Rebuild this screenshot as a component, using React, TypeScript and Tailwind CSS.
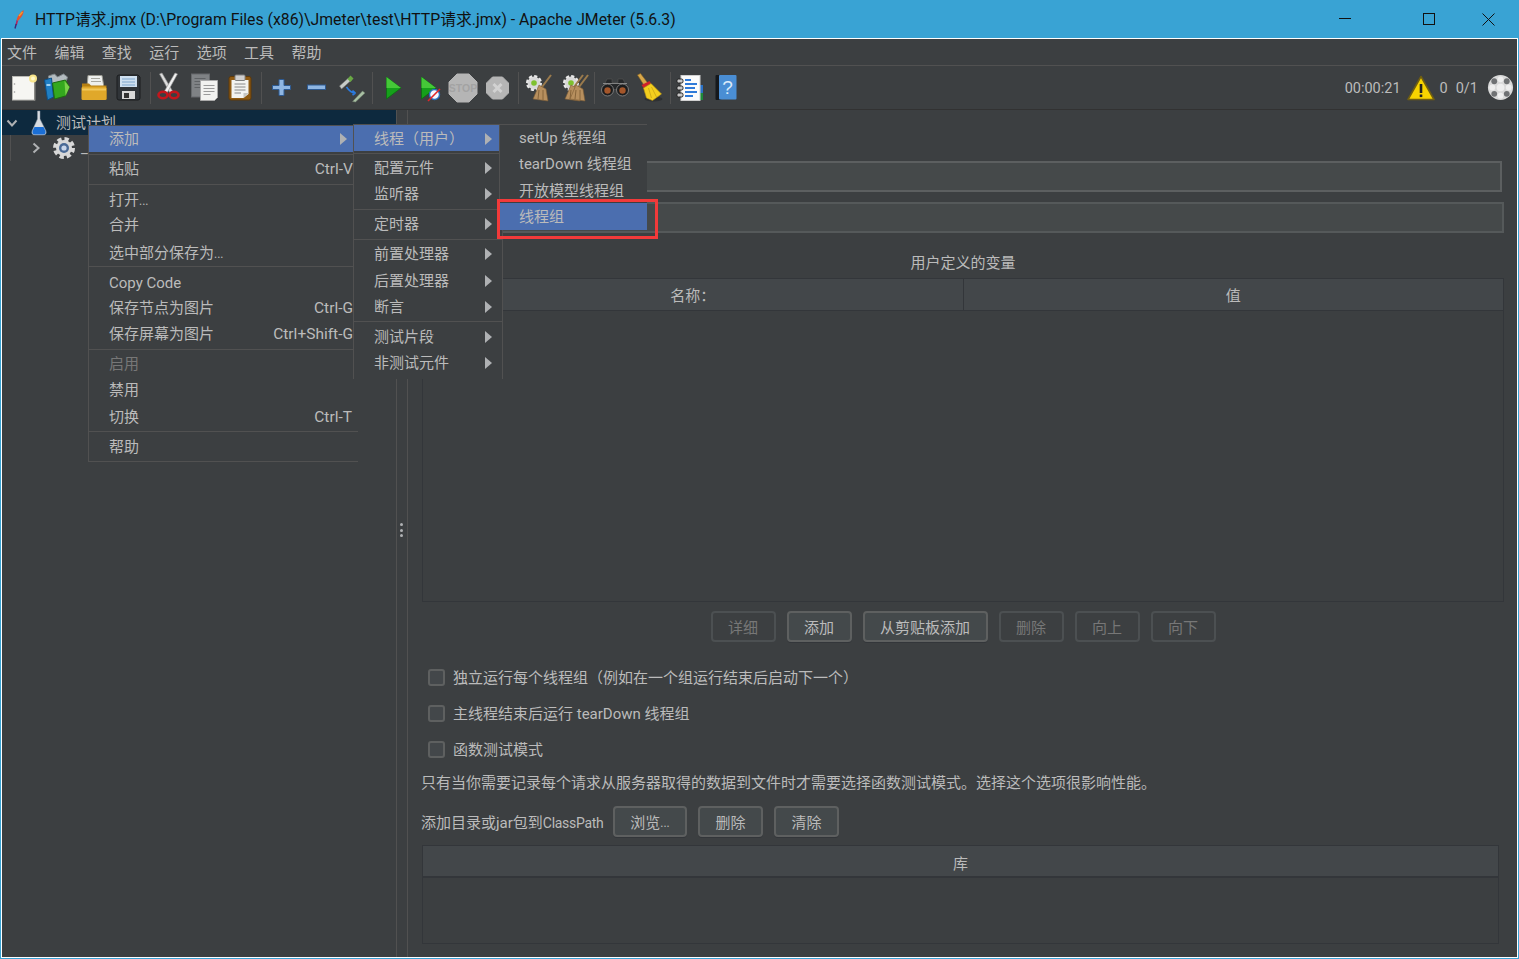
import React from "react";

const FONT = "font-['Roboto','Noto_Sans_CJK_SC',sans-serif]";

const Svg = ({ children, t }: { children: React.ReactNode; t?: string }) => (
  <svg viewBox="0 0 32 32" className="w-8 h-8 block" fill="none"><g transform={t}>{children}</g></svg>
);

const NewIcon = () => (
  <Svg>
    <rect x="3.5" y="4.5" width="22" height="23.5" fill="#f6f6f2" stroke="#b9b9b4" />
    <rect x="25" y="6" width="1.5" height="22.5" fill="#8a8a86" />
    <circle cx="5.5" cy="12" r="0.8" fill="#999" />
    <circle cx="5.5" cy="20" r="0.8" fill="#999" />
    <circle cx="24" cy="6.5" r="4" fill="#f7e48a" />
    <circle cx="24" cy="6.5" r="2" fill="#fff8c8" />
  </Svg>
);
const TemplatesIcon = () => (
  <Svg t="translate(-2.5 -1)">
    <path d="M7 5 L13 3 L16 6 L22 3 L26 6 L24 13 L8 13 Z" fill="#b4bcc0" stroke="#7d8589" />
    <path d="M3 9 L10 7 L12 26 L6 29 Z" fill="#1f7fc4" stroke="#0e4f85" />
    <path d="M11 12 L24 9 L28 16 L24 25 L13 28 Z" fill="#34a81e" stroke="#1d6a10" />
    <path d="M23 10 L28 16 L24 25 Z" fill="#7ad04a" />
    <rect x="5" y="13" width="4" height="2" fill="#9cd1f2" />
  </Svg>
);
const OpenIcon = () => (
  <Svg t="translate(0 -1.5)">
    <path d="M9 5 L23 5 L25 17 L8 17 Z" fill="#eef0ee" stroke="#9a9a92" />
    <path d="M12 8 H21 M12 11 H22" stroke="#a8a8a0" />
    <path d="M3 13 H10 L12 15 H27.5 V29 H3 Z" fill="#b57f13" />
    <path d="M2.5 18 Q2.5 16 4 16 H26.5 L27.5 18 V28 Q27.5 29.5 26 29.5 H4 Q2.5 29.5 2.5 28 Z" fill="#e0a82a" />
    <path d="M3 18 H27 V20 H3 Z" fill="#f2c85a" />
  </Svg>
);
const SaveIcon = () => (
  <Svg>
    <path d="M3 5 Q3 3 5 3 H24 L26 5 V26 Q26 28 24 28 H5 Q3 28 3 26 Z" fill="#303438" stroke="#1a1c1e" />
    <rect x="6" y="4" width="17" height="11" fill="#cfe0f0" />
    <path d="M8 7 H21 M8 10 H21 M8 13 H21" stroke="#7ea6cc" />
    <rect x="8" y="19" width="13" height="8" fill="#d8d8d8" />
    <rect x="10" y="21" width="5" height="5" fill="#333" />
  </Svg>
);
const CutIcon = () => (
  <Svg t="translate(-1.5 -2)">
    <path d="M6 4 L8.5 3 L19 21 L16.5 23 Z" fill="#dcdcdc" stroke="#8f8f8f" strokeWidth="0.6" />
    <path d="M24 4 L21.5 3 L11 21 L13.5 23 Z" fill="#f0f0f0" stroke="#8f8f8f" strokeWidth="0.6" />
    <ellipse cx="9.5" cy="25" rx="4.5" ry="3.2" stroke="#c4161c" strokeWidth="2.6" />
    <ellipse cx="20.5" cy="25" rx="4.5" ry="3.2" stroke="#c4161c" strokeWidth="2.6" />
  </Svg>
);
const CopyIcon = () => (
  <Svg t="translate(-1.5 -1.5)">
    <rect x="3" y="3.5" width="18" height="23" fill="#7f8285" stroke="#66696c" />
    <path d="M6 8 H17 M6 11 H17 M6 14 H17 M6 17 H12" stroke="#5f6265" />
    <path d="M12 10 H29 V27 L26 30 H12 Z" fill="#f2f2f0" stroke="#aaa" />
    <path d="M15 15 H26 M15 18 H26 M15 21 H26 M15 24 H22" stroke="#9a9a9a" />
  </Svg>
);
const PasteIcon = () => (
  <Svg>
    <rect x="4" y="4.5" width="22" height="23.5" rx="2" fill="#8f5a12" stroke="#5e3a0a" />
    <path d="M6.5 8 H23.5 V22 L18.5 26 H6.5 Z" fill="#f3f3f1" />
    <path d="M18.5 26 V21 H23.5 Z" fill="#c5c5c2" />
    <rect x="10" y="3" width="10" height="5.5" rx="1" fill="#cfcfcf" stroke="#808080" />
    <path d="M9.5 12 H20.5 M9.5 15 H20.5 M9.5 18 H20.5 M9.5 21 H16" stroke="#888" />
  </Svg>
);
const PlusIcon = () => (
  <Svg t="translate(-0.5 -0.5)">
    <path d="M13.5 8 H18.5 V14 H25 V18 H18.5 V24 H13.5 V18 H7 V14 H13.5 Z" fill="#8fb6e2" stroke="#2d5a92" />
  </Svg>
);
const MinusIcon = () => (
  <Svg t="translate(-0.5 -0.5)">
    <rect x="7" y="13.5" width="18" height="4.5" fill="#8fb6e2" stroke="#2d5a92" />
  </Svg>
);
const ToggleIcon = () => (
  <Svg t="translate(-0.5 -1)">
    <path d="M4 15 L13 7 L15.5 9.5 L6 18 Z" fill="#c8ccc8" stroke="#777" strokeWidth="0.6" />
    <path d="M12 8 L15 4.5 L18 7.5 L15 11 Z" fill="#69a844" />
    <path d="M11 16 Q15 22 20 22 M20 22 L17 19.5 M20 22 L17 24" stroke="#2a7ae0" strokeWidth="1.6" />
    <path d="M17 30.5 L27 20 L29.5 22 L20 31 Z" fill="#a9c0a4" stroke="#6b7a68" strokeWidth="0.5" />
  </Svg>
);
const PlayIcon = ({ badge }: { badge?: boolean }) => (
  <Svg>
    <path d="M9.5 5 L24 16 L9.5 27 Z" fill="#15a01a" stroke="#0d6b12" strokeWidth="0.8" />
    <path d="M9.5 5 L24 16 L9.5 16 Z" fill="#45c838" />
    {badge && (
      <>
        <circle cx="22.5" cy="22.5" r="5" fill="#f4f8ff" stroke="#2a6fc0" strokeWidth="1.4" />
        <path d="M16 29 L28 17" stroke="#e0262a" strokeWidth="1.6" />
      </>
    )}
  </Svg>
);
const StopIcon = () => (
  <svg viewBox="0 0 32 32" className="w-8 h-8 block">
    <path d="M10 2 H22 L30 10 V22 L22 30 H10 L2 22 V10 Z" fill="#b5b5b5" stroke="#b5b5b5" strokeWidth="1" strokeLinejoin="round" />
    <text x="16" y="20" textAnchor="middle" fontSize="10.5" fontWeight="700" fill="#a3a3a3" fontFamily="Liberation Sans, sans-serif">STOP</text>
  </svg>
);
const ShutdownIcon = () => (
  <Svg t="translate(-0.5 0)">
    <path d="M11 5 H21 L27 11 V21 L21 27 H11 L5 21 V11 Z" fill="#b5b5b5" stroke="#b5b5b5" strokeLinejoin="round" />
    <path d="M12 12 L20 20 M20 12 L12 20" stroke="#d2d2d2" strokeWidth="3" />
  </Svg>
);
const Broom = ({ x = 0 }: { x?: number }) => (
  <g transform={`translate(${x} 0)`}>
    <path d="M28 3 L19 15" stroke="#9a7a4c" strokeWidth="2" />
    <path d="M16 13 L23 17 L25 29 L10 27 Z" fill="#b78f5e" stroke="#7a5a34" strokeWidth="0.6" />
    <path d="M16 18 L15 27 M20 18 L20 28" stroke="#86643a" />
  </g>
);
const ClearIcon = ({ all }: { all?: boolean }) => (
  <Svg>
    <g transform={all ? "translate(2 0)" : undefined}>
      <circle cx="11" cy="11" r="6.5" fill="#d9d9d9" stroke="#e8e8e8" strokeWidth="3" strokeDasharray="3 2" />
      <circle cx="11" cy="11" r="6" fill="#d8d8d8" />
      <circle cx="11" cy="11" r="2.8" fill="#7fc12f" />
    </g>
    {all && <Broom x={-3} />}
    <Broom x={all ? 2 : 0} />
  </Svg>
);
const BinocularsIcon = () => (
  <Svg t="translate(0 -1.5)">
    <path d="M8 8.5 H13 V12 H19 V8.5 H24 L29 19 H3 Z" fill="#26282a" stroke="#555" strokeWidth="0.6" />
    <circle cx="8.5" cy="19.5" r="6" fill="#1c1d1e" stroke="#8d8d8d" strokeWidth="0.8" />
    <circle cx="23.5" cy="19.5" r="6" fill="#1c1d1e" stroke="#8d8d8d" strokeWidth="0.8" />
    <circle cx="8.5" cy="20" r="3.2" fill="#a4562a" />
    <circle cx="23.5" cy="20" r="3.2" fill="#a4562a" />
    <path d="M4 13 H28" stroke="#9a9a9a" strokeWidth="0.8" />
  </Svg>
);
const YellowBroomIcon = () => (
  <Svg t="translate(-0.5 0)">
    <ellipse cx="20" cy="27" rx="9" ry="2.5" fill="#2f3133" />
    <path d="M4 3 L7 1.5 L15 12 L11 14 Z" fill="#d8a84a" stroke="#8c6420" strokeWidth="0.6" />
    <path d="M8 13 L16 9 L17.5 11.5 L10 16 Z" fill="#d0202a" />
    <path d="M10 16 L17.5 11.5 L28 22 L19 28.5 L13 26 Z" fill="#f4cf1e" stroke="#bb9410" strokeWidth="0.6" />
    <path d="M15 16 L18 26 M18 15 L23 25" stroke="#c9a314" strokeWidth="0.8" />
  </Svg>
);
const ListIcon = () => (
  <Svg>
    <rect x="23" y="13" width="5" height="8" fill="#2a72c8" />
    <rect x="23" y="21" width="5" height="7" fill="#1d8a3a" />
    <rect x="6" y="3.5" width="19" height="25" fill="#fbfbfb" stroke="#d0d0d0" />
    <rect x="2" y="7" width="6" height="4" rx="1.5" fill="#c8c8c8" stroke="#222" />
    <rect x="2" y="14" width="6" height="4" rx="1.5" fill="#c8c8c8" stroke="#222" />
    <rect x="2" y="21" width="6" height="4" rx="1.5" fill="#c8c8c8" stroke="#222" />
    <path d="M10 8 H16 M10 12 H22 M10 16 H20 M10 20 H22 M10 24 H18" stroke="#2f7ad8" strokeWidth="1.8" />
  </Svg>
);
const HelpIcon = () => (
  <svg viewBox="0 0 32 32" className="w-8 h-8 block">
    <rect x="5.5" y="3" width="6" height="25" rx="1" fill="#15181c" />
    <rect x="9" y="3" width="17.5" height="24.5" rx="1" fill="#4a8ed4" />
    <text x="17.5" y="22" textAnchor="middle" fontSize="19" fill="#dcebfa" fontFamily="Liberation Sans, sans-serif">?</text>
  </svg>
);
const WarningIcon = () => (
  <svg viewBox="0 0 28 26" className="w-7 h-[26px] block">
    <path d="M14 1.5 L27 24.5 H1 Z" fill="#f7d300" stroke="#6f5e12" strokeWidth="1.6" strokeLinejoin="round" />
    <rect x="12.7" y="9" width="2.6" height="9" fill="#222" />
    <rect x="12.7" y="19.5" width="2.6" height="2.6" fill="#222" />
  </svg>
);
const BallIcon = () => (
  <svg viewBox="0 0 28 28" className="w-[27px] h-[27px] block">
    <circle cx="14" cy="14" r="13" fill="#d9d9d9" />
    <circle cx="14" cy="14" r="4" fill="#eeeeee" />
    <circle cx="14" cy="5.5" r="3" fill="#eeeeee" />
    <circle cx="14" cy="22.5" r="3" fill="#eeeeee" />
    <circle cx="5.5" cy="14" r="3" fill="#eeeeee" />
    <circle cx="22.5" cy="14" r="3" fill="#eeeeee" />
    <circle cx="7.5" cy="7.5" r="3" fill="#6f7173" />
    <circle cx="20.5" cy="7.5" r="3" fill="#6f7173" />
    <circle cx="7.5" cy="20.5" r="3" fill="#6f7173" />
    <circle cx="20.5" cy="20.5" r="3" fill="#6f7173" />
  </svg>
);
const FeatherIcon = () => (
  <svg viewBox="0 0 16 24" className="w-4 h-6 block">
    <path d="M13.5 3 Q14 7 10.5 11 L8 14 L6.5 13 Q8 7 13.5 3 Z" fill="#e8512c" />
    <path d="M9 9 L12.5 5" stroke="#f2a02f" strokeWidth="1.4" />
    <path d="M8 14 L6.5 13 L5.5 18 L7 18 Z" fill="#b8205a" />
    <path d="M6.2 17 L5 21.5" stroke="#3a2a78" strokeWidth="1.4" />
  </svg>
);
const FlaskIcon = () => (
  <svg viewBox="0 0 20 26" className="w-5 h-[26px] block">
    <path d="M8.5 1 H11 V9 L17 21 Q18 25 14 25 H6 Q2 25 3 21 L8.5 9 Z" fill="#d7dce2" stroke="#8a96a4" strokeWidth="0.5" />
    <path d="M5.5 17 H14.5 L16.5 21 Q17 24.5 14 24.5 H6 Q3 24.5 3.5 21 Z" fill="#1b6fd6" />
  </svg>
);
const GearIcon = () => (
  <svg viewBox="0 0 24 24" className="w-6 h-6 block">
    <circle cx="12" cy="12" r="9" fill="none" stroke="#d8d8d8" strokeWidth="4" strokeDasharray="4.2 2.9" />
    <circle cx="12" cy="12" r="8" fill="#d8d8d8" />
    <circle cx="12" cy="12" r="5" fill="#4a6a96" />
    <circle cx="12" cy="12" r="2.6" fill="#c9d6ea" />
  </svg>
);
const Chevron = ({ down }: { down?: boolean }) => (
  <svg viewBox="0 0 12 12" className="w-3 h-3 block">
    <path d={down ? "M1.5 3.5 L6 8.5 L10.5 3.5" : "M3.5 1.5 L8.5 6 L3.5 10.5"} fill="none" stroke="#afb1b3" strokeWidth="2" />
  </svg>
);
const Arrow = () => (
  <svg viewBox="0 0 7 12" className="w-[7px] h-3 block">
    <path d="M0 0 L7 6 L0 12 Z" fill="#afb1b3" />
  </svg>
);

const Dots = () => <span className="text-[12px]">...</span>;

const Sep = () => (
  <div className="w-[6px] h-[32px] flex justify-center shrink-0">
    <div className="w-px h-full bg-[#515151]" />
  </div>
);
const Tool = ({ children }: { children: React.ReactNode }) => (
  <div className="w-[35px] h-[32px] flex items-center justify-center shrink-0">{children}</div>
);

const Line = ({ className }: { className: string }) => (
  <div className={className}>
    <div className="h-px w-full bg-[#515151]" />
  </div>
);

const Item = ({ label, hot, kbd, disabled, arrow, className = "" }: { label: React.ReactNode; hot?: boolean; kbd?: string; disabled?: boolean; arrow?: boolean; className?: string }) => (
  <div className={`h-[26px] flex items-center justify-between ${hot ? "bg-[#4b6eaf]" : ""} ${disabled ? "text-[#777777]" : "text-[#bbbbbb]"} ${className}`}>
    <span className="whitespace-pre">{label}</span>
    {kbd && <span className="text-[15.5px]">{kbd}</span>}
    {arrow && <span className="mr-[7px]"><Arrow /></span>}
  </div>
);

const Btn = ({ label, w, off }: { label: React.ReactNode; w: string; off?: boolean }) => (
  <div className={`${w} h-[31px] pt-[2px] flex items-center justify-center rounded-[4px] border-2 ${off ? "border-[#4c5052] text-[#777777]" : "border-[#5e6060] bg-[#44494b] text-[#bbbbbb] shadow-[0_1px_0_#33363a]"}`}>{label}</div>
);

const Check = ({ label }: { label: string }) => (
  <div className="h-[36px] flex items-center pl-[7px]">
    <div className="w-[17px] h-[17px] rounded-[3px] border-2 border-[#5e6060] bg-[#43474a] mr-[8px]" />
    <span className="pt-[2px]">{label}</span>
  </div>
);

export default function App() {
  return (
    <div className={`relative w-[1519px] h-[959px] overflow-hidden bg-[#39a3d4] flex flex-col text-[15px] leading-[20px] text-[#bbbbbb] ${FONT}`}>
      <header className="h-[38px] shrink-0 flex items-center text-[#111111] pl-[10px]">
        <FeatherIcon />
        <span className="ml-[9px] pt-[2px] text-[15.8px] whitespace-pre">HTTP请求.jmx (D:\Program Files (x86)\Jmeter\test\HTTP请求.jmx) - Apache JMeter (5.6.3)</span>
        <div className="ml-auto flex items-center text-black">
          <svg viewBox="0 0 60 30" className="w-[60px] h-[30px]"><path d="M0 14.5 H12" stroke="#111" strokeWidth="1" /></svg>
          <svg viewBox="0 0 60 30" className="w-[60px] h-[30px]"><rect x="24.5" y="9.5" width="11" height="11" fill="none" stroke="#111" strokeWidth="1" /></svg>
          <svg viewBox="0 0 60 30" className="w-[60px] h-[30px]"><path d="M23.5 9.5 L35.5 21.5 M35.5 9.5 L23.5 21.5" stroke="#111" strokeWidth="1" /></svg>
        </div>
      </header>

      <div className="flex-1 min-h-0 mx-px mb-px border border-white bg-[#3c3f41] flex flex-col">
        <nav className="h-[26px] shrink-0 flex items-center gap-[17.4px] pl-[5px] border-b border-[#515151] box-content">
          {["文件", "编辑", "查找", "运行", "选项", "工具", "帮助"].map((m) => (
            <span key={m} className="pt-[2px]">{m}</span>
          ))}
        </nav>

        <div className="h-[43px] shrink-0 flex items-center pl-[5px] pr-[3px] border-b border-[#323232] box-content">
          <Tool><NewIcon /></Tool>
          <Tool><TemplatesIcon /></Tool>
          <Tool><OpenIcon /></Tool>
          <Tool><SaveIcon /></Tool>
          <Sep />
          <Tool><CutIcon /></Tool>
          <Tool><CopyIcon /></Tool>
          <Tool><PasteIcon /></Tool>
          <Sep />
          <Tool><PlusIcon /></Tool>
          <Tool><MinusIcon /></Tool>
          <Tool><ToggleIcon /></Tool>
          <Sep />
          <Tool><PlayIcon /></Tool>
          <Tool><PlayIcon badge /></Tool>
          <Tool><StopIcon /></Tool>
          <Tool><ShutdownIcon /></Tool>
          <Sep />
          <Tool><ClearIcon /></Tool>
          <Tool><ClearIcon all /></Tool>
          <Sep />
          <Tool><BinocularsIcon /></Tool>
          <Tool><YellowBroomIcon /></Tool>
          <Sep />
          <Tool><ListIcon /></Tool>
          <Tool><HelpIcon /></Tool>
          <div className="ml-auto flex items-center text-[14.5px]">
            <span className="pt-[2px]">00:00:21</span>
            <span className="ml-[6px]"><WarningIcon /></span>
            <span className="ml-[5px] pt-[2px]">0</span>
            <span className="ml-[8px] pt-[2px]">0/1</span>
            <span className="ml-[9px]"><BallIcon /></span>
          </div>
        </div>

        <div className="flex-1 min-h-0 flex">
          <aside className="w-[394px] shrink-0 border-r border-[#515151] box-content">
            <div className="h-[25px] bg-[#0d293e] flex items-center">
              <span className="ml-[4px]"><Chevron down /></span>
              <span className="ml-[11px]"><FlaskIcon /></span>
              <span className="ml-[7px]">测试计划</span>
            </div>
            <div className="h-[26px] flex items-center ml-[8px] border-l border-[#515151]">
              <span className="ml-[19px]"><Chevron /></span>
              <span className="ml-[10px]"><GearIcon /></span>
              <span className="ml-[5px]">_</span>
            </div>
          </aside>
          <div className="w-[8px] shrink-0 border-r border-[#515151] box-content flex flex-col items-center justify-center gap-[2.5px] pb-[7px] pr-[2px]">
            <i className="w-[3px] h-[3px] rounded-full bg-[#afb1b3]" />
            <i className="w-[3px] h-[3px] rounded-full bg-[#afb1b3]" />
            <i className="w-[3px] h-[3px] rounded-full bg-[#afb1b3]" />
          </div>

          <main className="flex-1 min-w-0 flex flex-col pl-[13px] pr-[12px] pt-[51px]">
            <div className="h-[31px] ml-[70px] mr-[3px] bg-[#45494a] border-2 border-[#5c5f60]" />
            <div className="h-[31px] ml-[70px] mr-[1px] mt-[10px] bg-[#45494a] border-2 border-[#55595a]" />
            <div className="h-[20px] mt-[20px] text-center">用户定义的变量</div>
            <div className="h-[324px] mt-[5px] ml-px mr-[1px] border border-[#33363a] flex flex-col">
              <div className="h-[32px] shrink-0 flex bg-[#43474a] border-b border-[#33363a]">
                <div className="flex-1 pt-[2px] flex items-center justify-center border-r border-[#33363a]">名称：</div>
                <div className="flex-1 pt-[2px] flex items-center justify-center">值</div>
              </div>
            </div>
            <div className="flex justify-center gap-[11px] mt-[9px]">
              <Btn label="详细" w="w-[65px]" off />
              <Btn label="添加" w="w-[65px]" />
              <Btn label="从剪贴板添加" w="w-[125px]" />
              <Btn label="删除" w="w-[65px]" off />
              <Btn label="向上" w="w-[65px]" off />
              <Btn label="向下" w="w-[65px]" off />
            </div>
            <div className="mt-[17px]">
              <Check label="独立运行每个线程组（例如在一个组运行结束后启动下一个）" />
              <Check label="主线程结束后运行 tearDown 线程组" />
              <Check label="函数测试模式" />
            </div>
            <div className="h-[20px] mt-[6px]">只有当你需要记录每个请求从服务器取得的数据到文件时才需要选择函数测试模式。选择这个选项很影响性能。</div>
            <div className="flex items-center mt-[13px]">
              <span className="w-[192px] shrink-0 pt-[2px] whitespace-nowrap">添加目录或jar包到<span className="text-[14px] tracking-[-0.3px]">ClassPath</span></span>
              <Btn label={<>浏览<Dots /></>} w="w-[74px]" />
              <div className="w-[11px]" />
              <Btn label="删除" w="w-[65px]" />
              <div className="w-[11px]" />
              <Btn label="清除" w="w-[65px]" />
            </div>
            <div className="h-[99px] mt-[8px] ml-px mr-[6px] border border-[#33363a]">
              <div className="h-[32px] pt-[6px] flex items-center justify-center bg-[#43474a] border-b-2 border-[#33363a]">库</div>
            </div>
          </main>
        </div>
      </div>

      <div className="absolute left-[88px] top-[125px] w-[269px] border-l border-t border-b border-[#515151] bg-[#3c3f41] box-content">
        <Item label="添加" hot className="pl-[20px] pr-[4px]" arrow />
        <Line className="h-[5px] pt-[2px]" />
        <Item label="粘贴" kbd="Ctrl-V" className="pl-[20px] pr-[5px] pb-[2px]" />
        <Line className="h-[3px] pt-[1px]" />
        <Item label={<>打开<Dots /></>} className="pl-[20px] pt-[2px]" />
        <Item label="合并" className="pl-[20px]" />
        <Item label={<>选中部分保存为<Dots /></>} className="pl-[20px] mt-px pt-[2px]" />
        <Line className="h-[5px] pt-[1px]" />
        <Item label="Copy Code" className="pl-[20px] pb-[2px] mt-px" />
        <Item label="保存节点为图片" kbd="Ctrl-G" className="pl-[20px] pr-[5px] pb-[2px] -mt-px" />
        <Item label="保存屏幕为图片" kbd="Ctrl+Shift-G" className="pl-[20px] pr-[5px] pb-[2px]" />
        <Line className="h-[4px] pt-[1px]" />
        <Item label="启用" disabled className="pl-[20px] pb-[2px]" />
        <Item label="禁用" className="pl-[20px] pb-[2px]" />
        <Item label="切换" kbd="Ctrl-T" className="pl-[20px] pr-[6px] pb-[2px] mt-px" />
        <Line className="h-[4px]" />
        <Item label="帮助" className="pl-[20px] pb-[2px]" />
      </div>

      <div className="absolute left-[353px] top-[124px] w-[148px] h-[254px] border-l border-t border-r border-[#515151] bg-[#3c3f41] box-content">
        <Item label="线程（用户）" hot arrow className="pl-[20px] w-[145px] pt-[2px]" />
        <Line className="h-[4px] pt-[2px]" />
        <Item label="配置元件" arrow className="pl-[20px] w-[145px]" />
        <Item label="监听器" arrow className="pl-[20px] w-[145px] pb-[1px]" />
        <Line className="h-[4px] pt-[2px]" />
        <Item label="定时器" arrow className="pl-[20px] w-[145px]" />
        <Line className="h-[4px] pt-[2px]" />
        <Item label="前置处理器" arrow className="pl-[20px] w-[145px]" />
        <Item label="后置处理器" arrow className="pl-[20px] w-[145px] pt-[2px]" />
        <Item label="断言" arrow className="pl-[20px] w-[145px] pt-[2px]" />
        <Line className="h-[4px] pt-[2px]" />
        <Item label="测试片段" arrow className="pl-[20px] w-[145px] pt-[2px]" />
        <Item label="非测试元件" arrow className="pl-[20px] w-[145px] pt-[2px]" />
      </div>

      <div className="absolute left-[499px] top-[124px] w-[148px] border-l border-t border-[#515151] bg-[#3c3f41]">
        <Item label="setUp 线程组" className="pl-[19px]" />
        <Item label="tearDown 线程组" className="pl-[19px]" />
        <Item label="开放模型线程组" className="pl-[19px] pt-[2px]" />
        <Item label="线程组" hot className="pl-[19px] h-[27px]" />
      </div>

      <div className="absolute left-[497px] top-[199px] w-[161px] h-[40px] border-[3px] border-[#f23a3a]" />
    </div>
  );
}
